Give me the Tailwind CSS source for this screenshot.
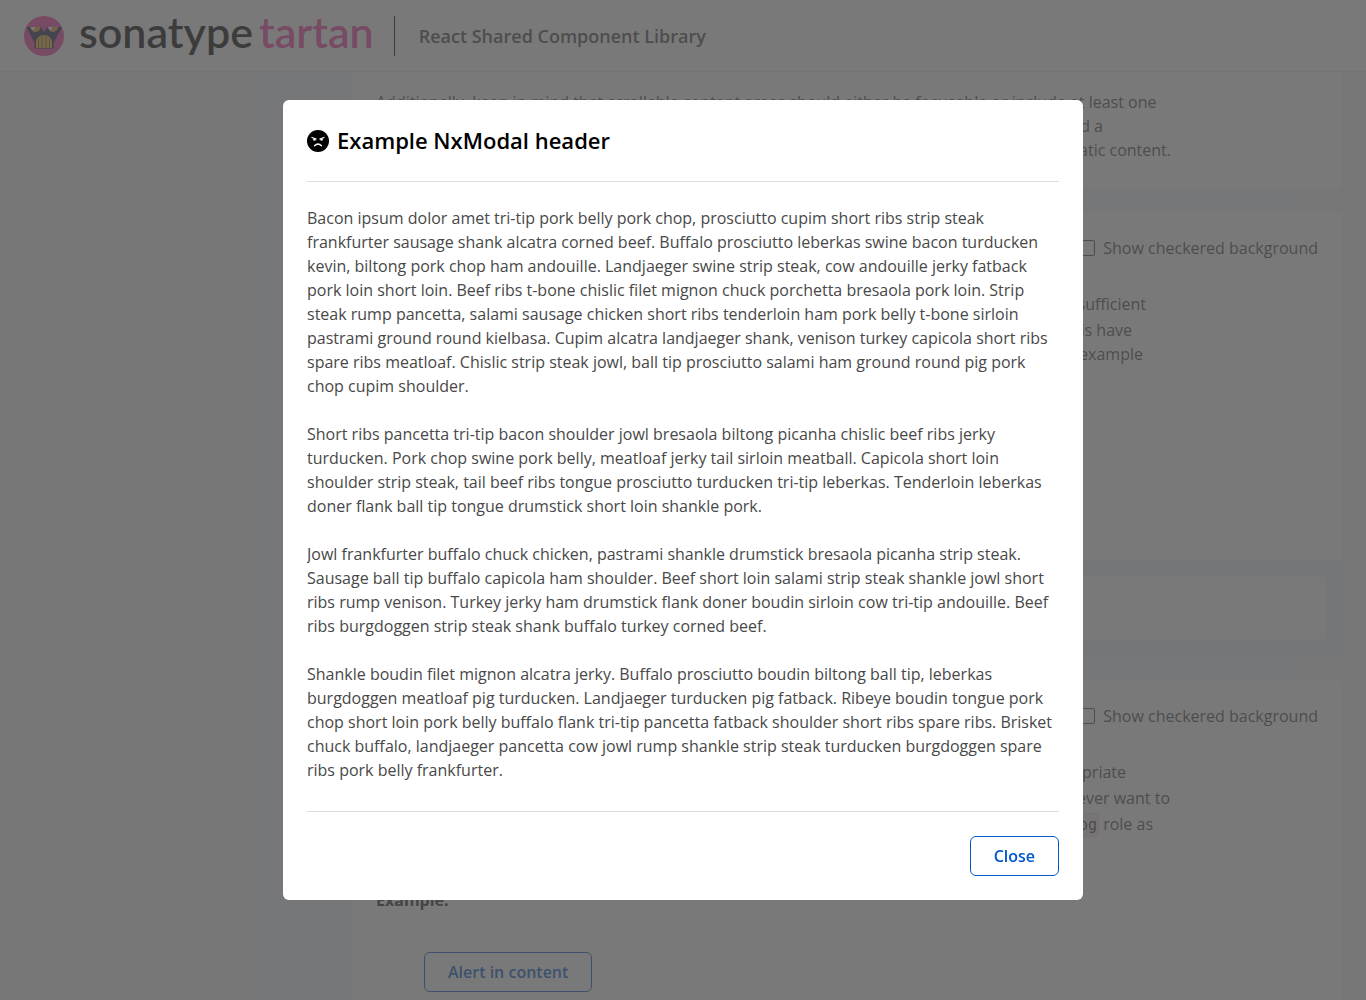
<!DOCTYPE html>
<html lang="en">
<head>
<meta charset="utf-8">
<title>Sonatype Tartan - React Shared Component Library</title>
<script src="https://cdn.jsdelivr.net/npm/@tailwindcss/browser@4"></script>
</head>
<body class="h-screen overflow-hidden bg-[#f4f4fb] font-['Open_Sans',sans-serif] text-base leading-6 text-[#484848]">
<div class="flex h-screen flex-col">
  <header class="flex h-[72px] shrink-0 items-center border-b border-[#e8e8ee] bg-white px-6">
    <a href="#" class="flex items-center" aria-label="Sonatype Tartan">
      <svg class="mr-[15px] size-10" viewBox="0 0 40 40" aria-hidden="true">
        <circle cx="20" cy="20" r="20" fill="#f042a5"/>
        <path d="M2.500 11H16.500L20 16l3.500-5H38l-8.500 16v5.500h-19V27z" fill="#1d2550"/>
        <path d="M6.500 11H16c0 2.700-2 4.700-4.500 4.700S7 14 6.500 11zM24 11h9.500c0 2.700-2 4.700-4.500 4.700S24.500 14 24 11z" fill="#fff"/>
        <path d="M11 11h5.500c0 2.700-2 4.700-4.500 4.700-1.500 0-2.600-.5-3.300-1.300C10 13.800 11 12.500 11 11zM28.500 11H34c0 2.700-2 4.700-4.500 4.700-1.500 0-2.600-.5-3.300-1.300 1.300-.6 2.300-1.900 2.300-3.400z" fill="#f5961f"/>
        <path d="M12 32v-6c0-4 3.500-7 8-7s8 3 8 7v6z" fill="#f7b733"/>
        <path d="M14.500 22v10M18 20v12M22 20v12M25.500 22v10" stroke="#7a6030" stroke-width="1"/>
      </svg>
      <span class="pb-2 font-['Lato'] text-[43px] leading-10 font-semibold text-black">sonatype</span>
      <span class="ml-[6px] pb-2 font-['Lato'] text-[43px] leading-10 font-semibold text-[#f042a5]">tartan</span>
    </a>
    <div class="ml-5 h-10 w-px bg-black"></div>
    <span class="ml-6 text-lg font-semibold">React Shared Component Library</span>
  </header>
  <div class="flex min-h-0 grow">
    <nav class="w-64 shrink-0" aria-label="Components"></nav>
    <main class="flex min-w-0 grow flex-col gap-6 overflow-hidden bg-linear-to-r from-[#f1f5fc] from-90% to-[#f4f4fb] to-95% pr-6 pl-24">
      <section class="h-[116px] shrink-0 rounded-b-md bg-white px-6 pt-[18px]">
        <p>Additionally, keep in mind that scrollable content areas should either be focusable or include at least one</p>
        <p class="w-[727px] text-right">focusable element, so that keyboard users are able to reach and scroll it, and a</p>
        <p class="w-[795px] text-right">tab index of zero. This also applies to modals that show nothing except for static content.</p>
      </section>
      <section class="flex h-[444px] shrink-0 flex-col rounded-md bg-white">
        <div class="flex items-center justify-between px-6 pt-6">
          <h2 class="text-xl leading-6 font-semibold">Scrolling Modal</h2>
          <label class="flex items-center gap-2"><input type="checkbox" class="size-4 appearance-none rounded-xs border border-[#484848]">Show checkered background</label>
        </div>
        <p class="mx-6 mt-8 w-[770px] text-right">Modals with sufficient</p>
        <p class="mx-6 mt-[2px] w-[756px] text-right">content in modals have</p>
        <p class="mx-6 w-[767px] text-right">a scroll bar, as in the example</p>
        <div class="mt-auto bg-[#edf0f7] p-4"><div class="h-16 rounded-md bg-white"></div></div>
      </section>
      <section class="h-[440px] shrink-0 rounded-md bg-white px-6 pt-6">
        <div class="flex items-center justify-between">
          <h2 class="text-xl leading-6 font-semibold">Alert Modal</h2>
          <label class="flex items-center gap-2"><input type="checkbox" class="size-4 appearance-none rounded-xs border border-[#484848]">Show checkered background</label>
        </div>
        <p class="mt-8 w-[750px] text-right">a role that is appropriate</p>
        <p class="mt-[2px] w-[794px] text-right">would ever want to</p>
        <p class="mt-[2px] w-[777px] text-right">the <code class="rounded-sm border border-[#f5d5e5] bg-[#fbeaf2] px-px py-[2px] font-['DejaVu_Sans_Mono',monospace] text-[15px]">alertdialog</code> role as</p>
        <p class="mt-[51px] font-bold text-[#222]">Example:</p>
        <button type="button" class="mt-10 ml-12 h-10 rounded-md border border-[#0056cc] px-[23px] font-semibold text-[#0056cc]">Alert in content</button>
      </section>
    </main>
  </div>
</div>
<div class="fixed inset-0 flex items-center justify-center bg-[#4f4f4f]/76">
  <div role="dialog" aria-modal="true" aria-labelledby="modal-title" class="flex h-[80vh] w-[800px] max-w-full flex-col rounded-md bg-white px-6">
    <header class="flex shrink-0 items-center gap-2 border-b border-[#dcdce6] py-6">
      <svg class="size-[22px]" viewBox="0 0 22 22" aria-hidden="true">
        <circle cx="11" cy="11" r="11" fill="#000"/>
        <path d="M5 7.500l4 1.500M17 7.500l-4 1.500M7.500 15.800q3.500-3.600 7 0" stroke="#fff" stroke-width="1.300" fill="none" stroke-linecap="round"/>
        <circle cx="7.400" cy="9.500" r="1.300" fill="#fff"/><circle cx="14.600" cy="9.500" r="1.300" fill="#fff"/>
      </svg>
      <h1 id="modal-title" class="text-[22px] leading-[33px] font-semibold text-black">Example NxModal header</h1>
    </header>
    <div class="flex min-h-0 grow flex-col gap-6 overflow-y-auto pt-6">
      <p>Bacon ipsum dolor amet tri-tip pork belly pork chop, prosciutto cupim short ribs strip steak frankfurter sausage shank alcatra corned beef. Buffalo prosciutto leberkas swine bacon turducken kevin, biltong pork chop ham andouille. Landjaeger swine strip steak, cow andouille jerky fatback pork loin short loin. Beef ribs t-bone chislic filet mignon chuck porchetta bresaola pork loin. Strip steak rump pancetta, salami sausage chicken short ribs tenderloin ham pork belly t-bone sirloin pastrami ground round kielbasa. Cupim alcatra landjaeger shank, venison turkey capicola short ribs spare ribs meatloaf. Chislic strip steak jowl, ball tip prosciutto salami ham ground round pig pork chop cupim shoulder.</p>
      <p>Short ribs pancetta tri-tip bacon shoulder jowl bresaola biltong picanha chislic beef ribs jerky turducken. Pork chop swine pork belly, meatloaf jerky tail sirloin meatball. Capicola short loin shoulder strip steak, tail beef ribs tongue prosciutto turducken tri-tip leberkas. Tenderloin leberkas doner flank ball tip tongue drumstick short loin shankle pork.</p>
      <p>Jowl frankfurter buffalo chuck chicken, pastrami shankle drumstick bresaola picanha strip steak. Sausage ball tip buffalo capicola ham shoulder. Beef short loin salami strip steak shankle jowl short ribs rump venison. Turkey jerky ham drumstick flank doner boudin sirloin cow tri-tip andouille. Beef ribs burgdoggen strip steak shank buffalo turkey corned beef.</p>
      <p>Shankle boudin filet mignon alcatra jerky. Buffalo prosciutto boudin biltong ball tip, leberkas burgdoggen meatloaf pig turducken. Landjaeger turducken pig fatback. Ribeye boudin tongue pork chop short loin pork belly buffalo flank tri-tip pancetta fatback shoulder short ribs spare ribs. Brisket chuck buffalo, landjaeger pancetta cow jowl rump shankle strip steak turducken burgdoggen spare ribs pork belly frankfurter.</p>
    </div>
    <footer class="flex shrink-0 justify-end border-t border-[#dcdce6] py-6">
      <button type="button" class="h-10 rounded-md border border-[#0056cc] px-[23px] font-semibold text-[#0056cc]">Close</button>
    </footer>
  </div>
</div>
</body>
</html>
